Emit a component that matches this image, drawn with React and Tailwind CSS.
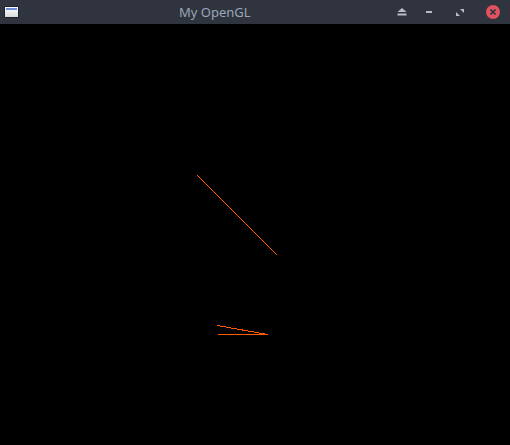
export default function App() {
    return (
        <div className="w-[510px] h-[445px] flex flex-col bg-black overflow-hidden">
            {/* title bar */}
            <div className="h-[24px] shrink-0 bg-[#2f343f] flex items-center relative">
                <div className="ml-[4px] w-[15px] h-[12px] rounded-[1px] border border-[#1f232b] bg-gradient-to-b from-[#ffffff] to-[#d8dcdc] flex flex-col">
                    <div className="h-[2px] mx-[1px] mt-[1px] bg-[#6b8fd6]" />
                </div>
                <div
                    className="absolute left-[179px] top-[3px] text-[13px] leading-[18px] text-[#9ba6b8]"
                    style={{ fontFamily: '"Noto Sans", "Open Sans", sans-serif' }}
                >
                    My OpenGL
                </div>
                <div className="ml-auto flex items-center">
                    {/* eject */}
                    <svg width="10" height="8" viewBox="0 0 10 8" className="mr-[19px]">
                        <polygon points="5,0 9.5,4 0.5,4" fill="#b8bcc4" />
                        <rect x="0.5" y="5.5" width="9" height="2" fill="#b8bcc4" />
                    </svg>
                    {/* minimize */}
                    <div className="w-[6px] h-[2px] bg-[#b8bcc4] mr-[24px]" />
                    {/* restore */}
                    <svg width="8" height="7" viewBox="0 0 8 7" className="mr-[22px]">
                        <polygon points="4,0 8,0 8,4" fill="#b8bcc4" />
                        <polygon points="0,3 0,7 4,7" fill="#b8bcc4" />
                    </svg>
                    {/* close */}
                    <div className="w-[14px] h-[14px] rounded-full bg-[#e0525e] flex items-center justify-center mr-[10px]">
                        <svg width="6" height="6" viewBox="0 0 6 6">
                            <path d="M0.5 0.5 L5.5 5.5 M5.5 0.5 L0.5 5.5" stroke="#2f343f" strokeWidth="1.6" />
                        </svg>
                    </div>
                </div>
            </div>
            {/* GL canvas */}
            <div className="flex-1 bg-black">
                <svg width="510" height="421" viewBox="0 24 510 421" shapeRendering="crispEdges">
                    <line x1="197.5" y1="175.5" x2="277.5" y2="255.5" stroke="#ff5a00" strokeWidth="1" />
                    <line x1="217.5" y1="325.5" x2="267.5" y2="334.5" stroke="#ff5a00" strokeWidth="1" />
                    <line x1="217.5" y1="334.5" x2="267.5" y2="334.5" stroke="#ff5a00" strokeWidth="1" />
                </svg>
            </div>
        </div>
    );
}
